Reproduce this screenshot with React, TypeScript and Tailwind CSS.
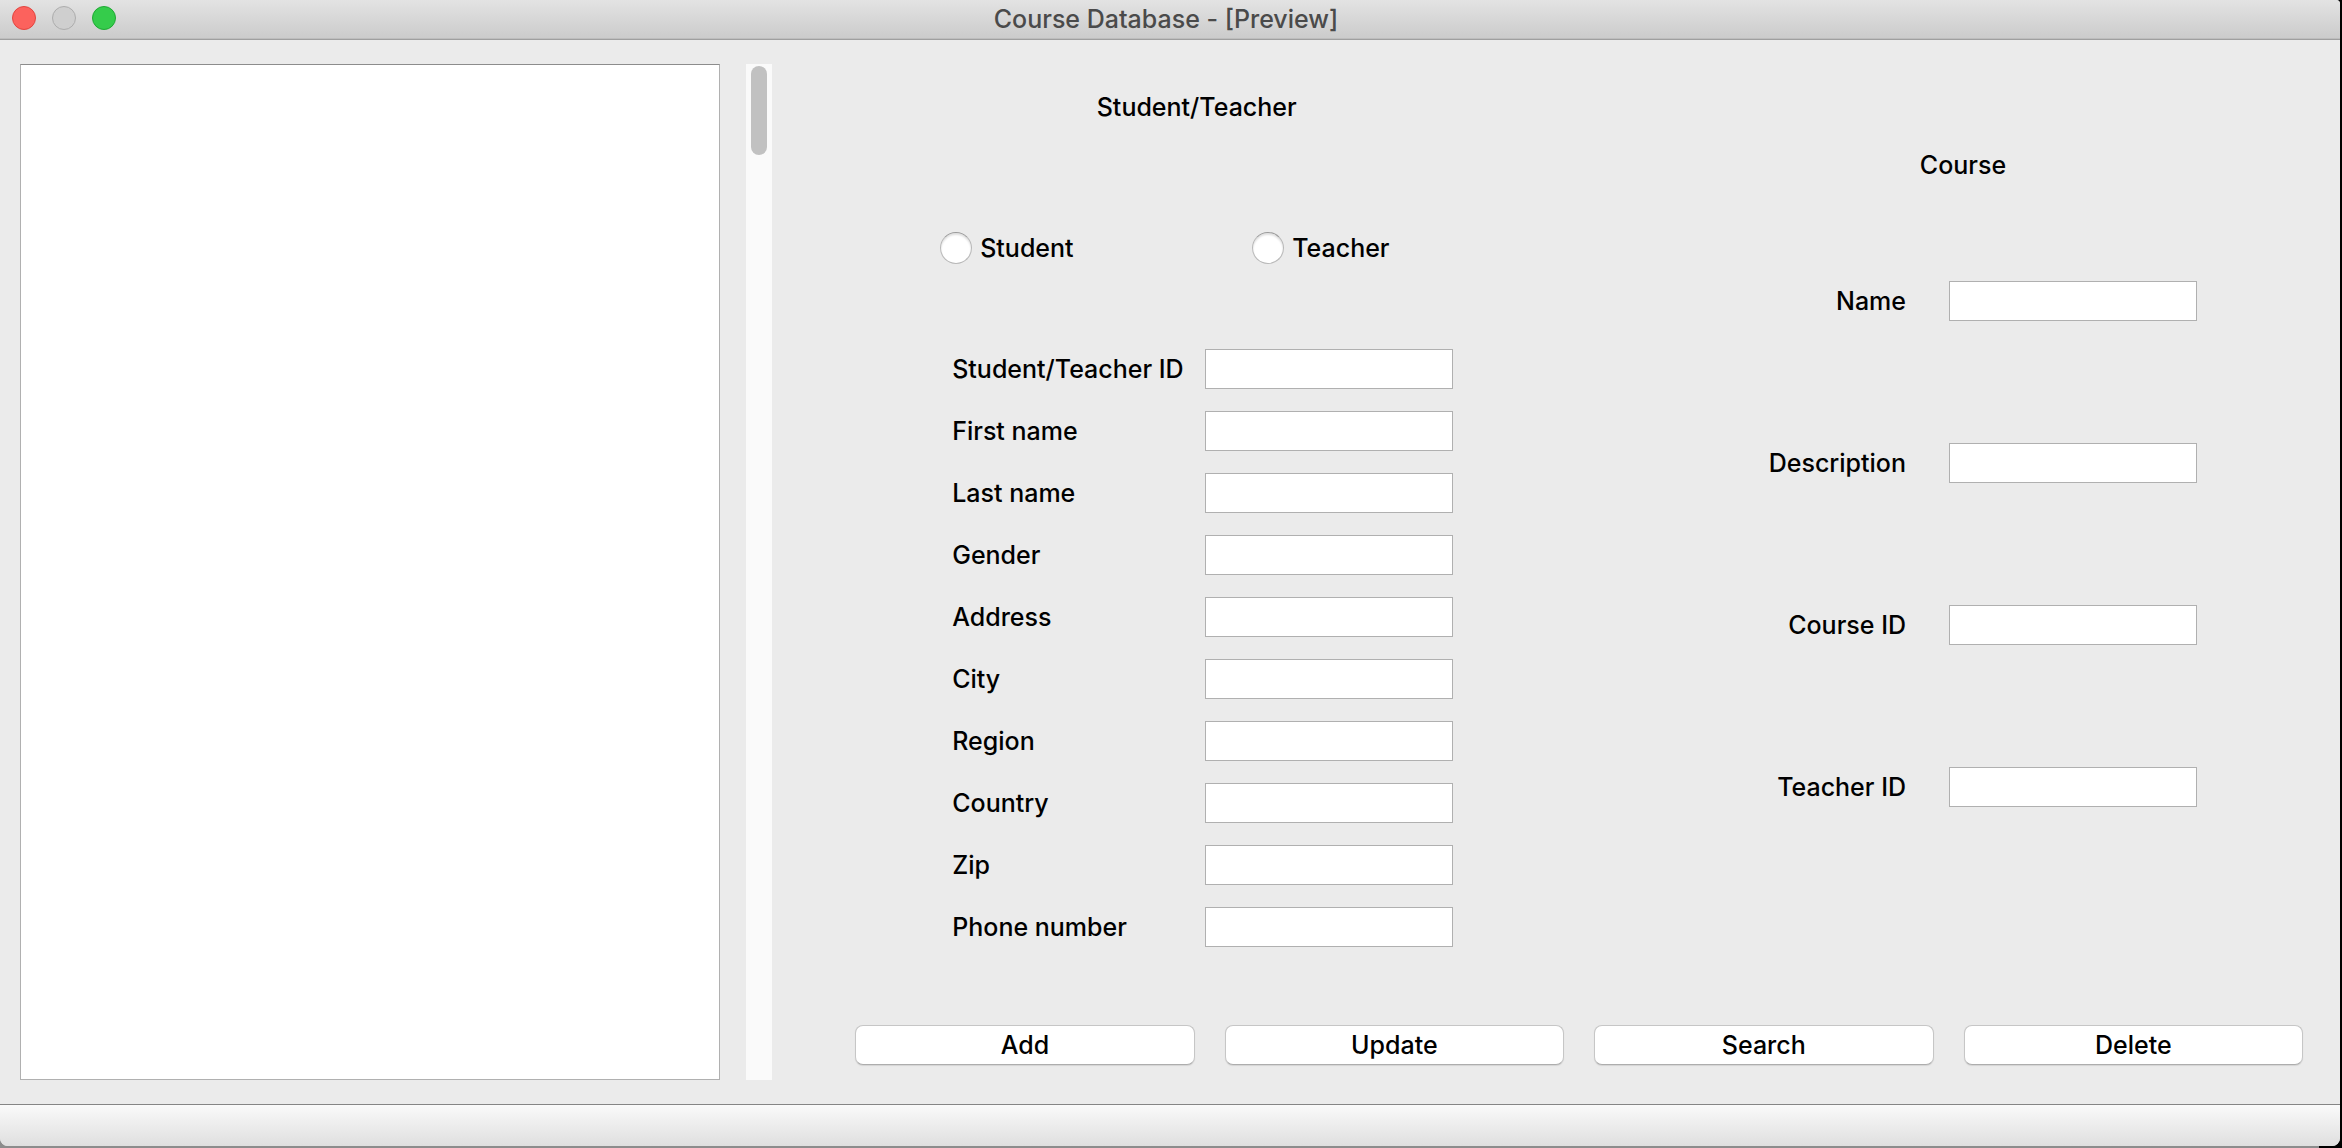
const personFields = [
  "Student/Teacher ID",
  "First name",
  "Last name",
  "Gender",
  "Address",
  "City",
  "Region",
  "Country",
  "Zip",
  "Phone number",
];

const courseFields = ["Name", "Description", "Course ID", "Teacher ID"];

const actions = ["Add", "Update", "Search", "Delete"];

function TitleBar() {
  return (
    <header className="grid h-10 shrink-0 grid-cols-[1fr_auto_1fr] items-center border-b border-[#9f9f9f] bg-linear-to-b from-[#e3e3e3] to-[#cbcbcb] shadow-[inset_0_-1px_0_#bdbdbd]">
      <div className="flex gap-4 pb-[3px] pl-3">
        <button aria-label="Close" className="size-6 rounded-full border border-[#e2453f] bg-[#fc625d]" />
        <button aria-label="Minimize" className="size-6 rounded-full border border-[#adadad] bg-[#cfcfcf]" />
        <button aria-label="Zoom" className="size-6 rounded-full border border-[#1fa934] bg-[#35cc4b]" />
      </div>
      <h1 className="pr-2 pb-[2px] leading-8 text-[#4a4a4a]">Course Database - [Preview]</h1>
    </header>
  );
}

function TextField({ id }: { id: string }) {
  return (
    <input
      id={id}
      type="text"
      className="h-10 w-[248px] border border-[#b0b0b0] bg-white px-2 outline-none"
    />
  );
}

function RoleOption({ label }: { label: string }) {
  return (
    <label className="flex items-center gap-2">
      <input
        type="radio"
        name="role"
        className="size-8 appearance-none rounded-full border border-[#b8b8b8] border-t-[#999] bg-white shadow-[inset_0_2px_2px_#e0e0e0] checked:bg-[#3b99fc]"
      />
      {label}
    </label>
  );
}

function PersonForm() {
  return (
    <section className="flex w-[513px] flex-col pt-[27px]">
      <h2 className="self-center leading-8">Student/Teacher</h2>
      <div className="mt-[109px] grid grid-cols-[312px_1fr]">
        <RoleOption label="Student" />
        <RoleOption label="Teacher" />
      </div>
      <div className="mt-[85px] flex flex-col gap-[22px] pl-3">
        {personFields.map((field) => (
          <div key={field} className="grid grid-cols-[253px_1fr] items-center">
            <label htmlFor={"person-" + field}>{field}</label>
            <TextField id={"person-" + field} />
          </div>
        ))}
      </div>
    </section>
  );
}

function CourseForm() {
  return (
    <section className="flex w-[468px] flex-col pt-[85px]">
      <h2 className="self-center leading-8">Course</h2>
      <div className="mt-[100px] flex flex-col gap-[122px]">
        {courseFields.map((field) => (
          <div key={field} className="flex items-center justify-end gap-[43px]">
            <label htmlFor={"course-" + field}>{field}</label>
            <TextField id={"course-" + field} />
          </div>
        ))}
      </div>
    </section>
  );
}

export default function App() {
  return (
    <div className="flex min-h-screen flex-col bg-linear-to-r from-[#8c8c8c] from-99% to-black to-99% pr-[2px] pb-[2px] font-[Inter,sans-serif] text-[25px] leading-8 font-medium text-black">
      <div className="flex grow flex-col overflow-hidden rounded-tr-sm rounded-b-lg bg-[#ebebeb]">
        <TitleBar />
        <main className="flex grow pt-6 pb-6 pl-5">
          <div
            role="listbox"
            aria-label="Records"
            className="grow border border-[#b0b0b0] border-t-[#8c8c8c] bg-white"
          />
          <div className="ml-[26px] flex w-[26px] justify-center bg-[#fafafa] pt-[2px]">
            <div className="h-[89px] w-4 rounded-full bg-[#c1c1c1]" />
          </div>
          <div className="ml-[83px] flex w-[64%] shrink-0 flex-col justify-between pr-[37px] pb-[15px]">
            <div className="flex justify-between pr-[106px] pl-[85px]">
              <PersonForm />
              <CourseForm />
            </div>
            <div className="grid grid-cols-4 gap-[30px]">
              {actions.map((action) => (
                <button
                  key={action}
                  className="h-10 rounded-lg border border-[#c6c6c6] border-b-[#adadad] bg-white shadow-[0_1px_1px_#d4d4d4]"
                >
                  {action}
                </button>
              ))}
            </div>
          </div>
        </main>
        <footer className="h-[42px] shrink-0 border-t border-[#858585] bg-linear-to-b from-[#fafafa] to-[#dfdfdf]" />
      </div>
    </div>
  );
}
